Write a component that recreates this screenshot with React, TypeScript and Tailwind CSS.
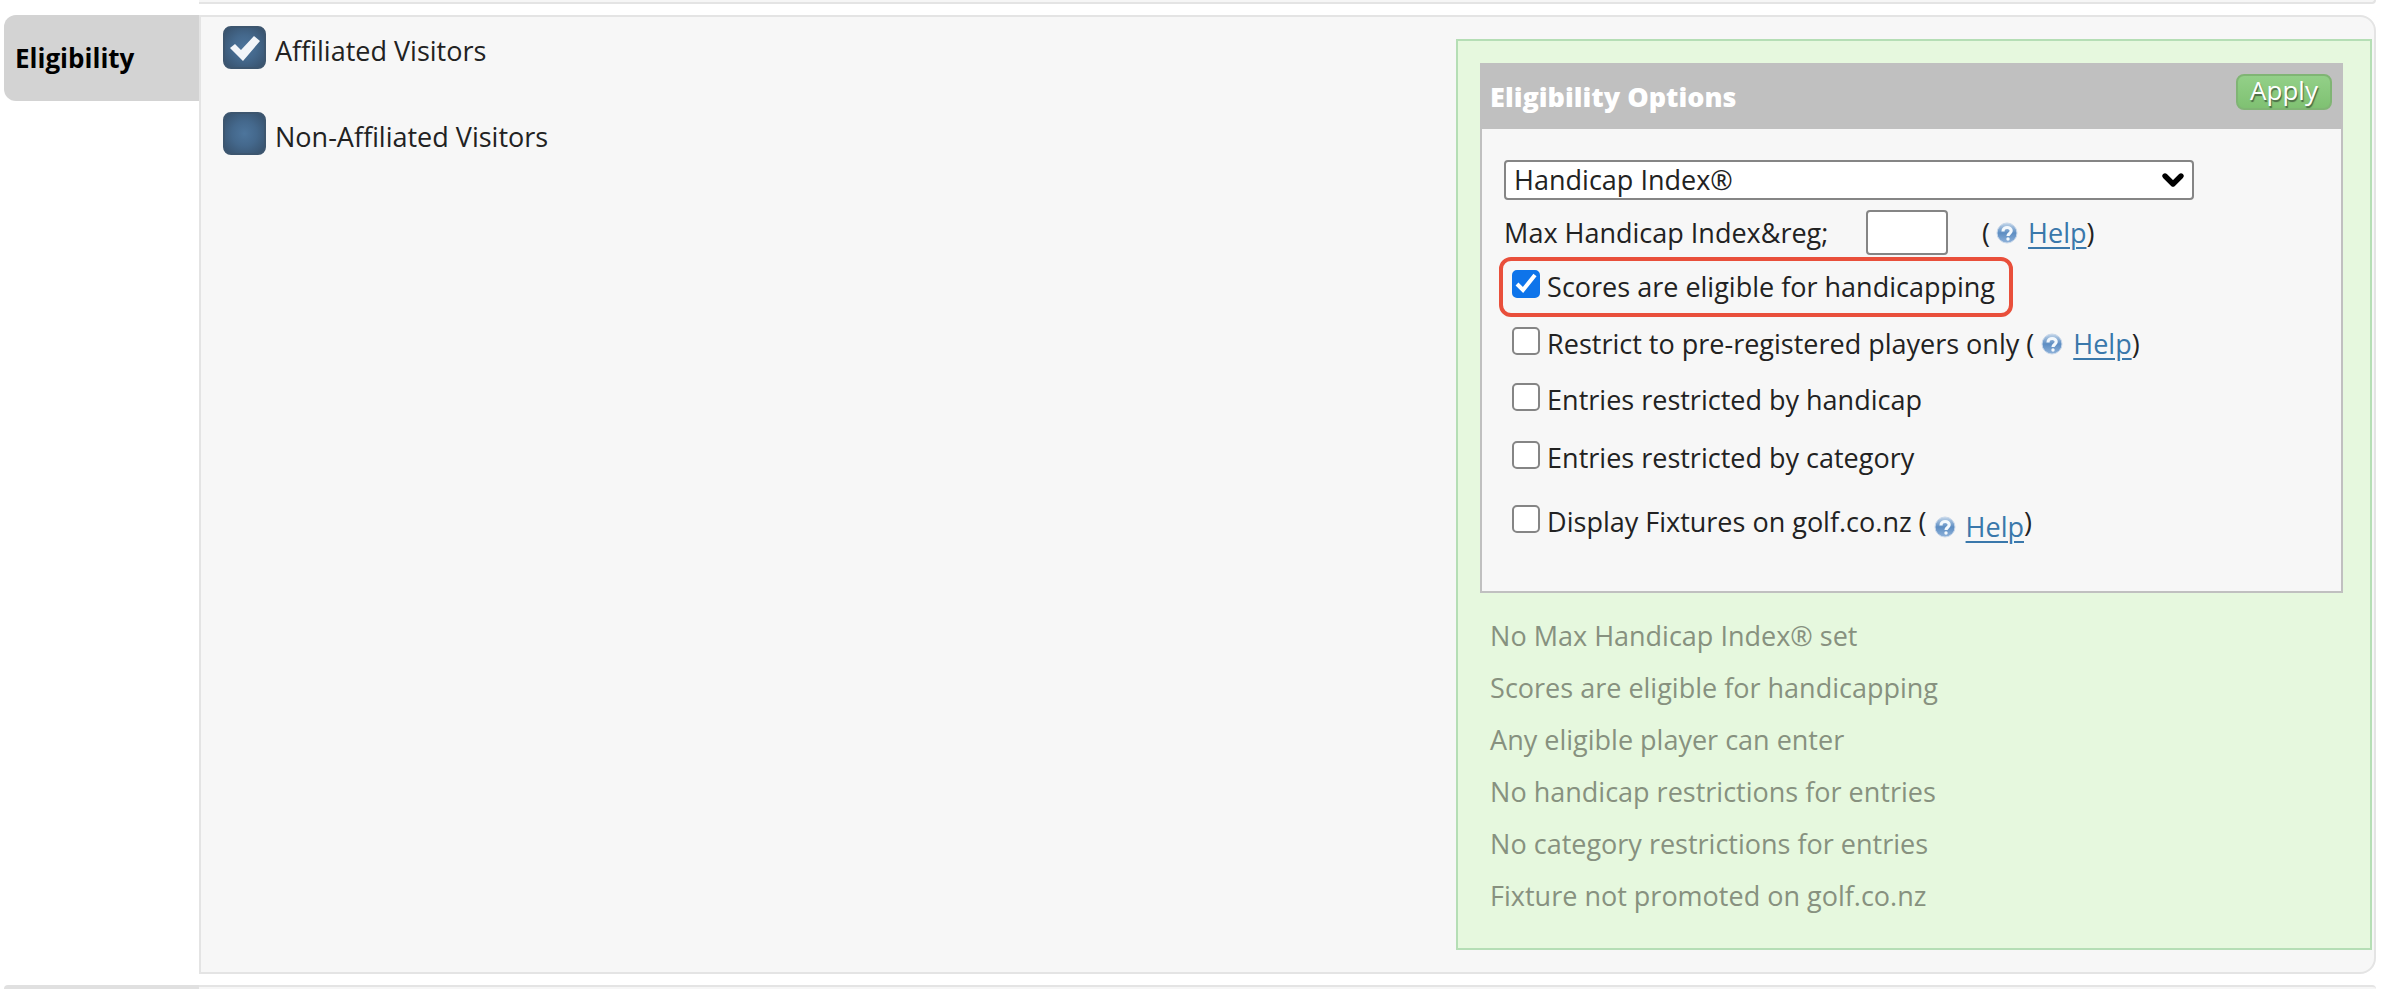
import React, { useState } from 'react';
import { ChevronDown } from 'lucide-react';

const summary = [
  'No Max Handicap Index® set',
  'Scores are eligible for handicapping',
  'Any eligible player can enter',
  'No handicap restrictions for entries',
  'No category restrictions for entries',
  'Fixture not promoted on golf.co.nz',
];

const HelpIcon = () => (
  <svg viewBox="0 0 22 22" className="size-[22px] shrink-0" aria-hidden="true">
    <defs>
      <linearGradient id="helpBall" x1="0" y1="0" x2="0" y2="1">
        <stop offset="0" stopColor="#c3d6ea" />
        <stop offset="0.5" stopColor="#5d8dc2" />
        <stop offset="1" stopColor="#8fb2da" />
      </linearGradient>
    </defs>
    <circle cx="11" cy="11" r="10" fill="url(#helpBall)" stroke="#c9d8ea" strokeWidth="1" />
    <path d="M7 9.500c0-5.500 8.500-5 8.200-.5-.2 2.500-3.200 2.500-3.200 5" fill="none" stroke="#f4f9fd" strokeWidth="3.200" />
    <circle cx="12" cy="17" r="1.700" fill="#f4f9fd" />
  </svg>
);

const HelpLink = () => (
  <span className="flex items-center">
    <HelpIcon />
    <a href="#help" className="ml-[10px] text-[#3a78ab] underline decoration-2 underline-offset-4">
      Help
    </a>
  </span>
);

interface CheckProps {
  id: string;
  label: string;
  defaultChecked?: boolean;
}

const VisitorCheck: React.FC<CheckProps> = ({ id, label, defaultChecked = false }) => {
  const [checked, setChecked] = useState(defaultChecked);

  return (
    <div className="flex h-[43px] items-center gap-[9px]">
      <span className="relative size-[43px] shrink-0">
        <input
          id={id}
          type="checkbox"
          checked={checked}
          onChange={() => setChecked(!checked)}
          className="block size-[43px] appearance-none rounded-lg border-2 border-[#3d566f] bg-[radial-gradient(circle,#4d759c_0%,#44688c_45%,#37506a_100%)]"
        />
        {checked && (
          <svg viewBox="0 0 43 43" className="pointer-events-none absolute inset-0 size-[43px]" aria-hidden="true">
            <path d="M7 22l5-4 6 6L31 10l6 5-17 20z" fill="#f2f5f9" />
          </svg>
        )}
      </span>
      <label htmlFor={id} className="mt-1.5">{label}</label>
    </div>
  );
};

const OptionCheck: React.FC<CheckProps> = ({ id, label, defaultChecked = false }) => {
  const [checked, setChecked] = useState(defaultChecked);

  return (
    <>
      <span className="relative mb-1.5 size-7 shrink-0">
        <input
          id={id}
          type="checkbox"
          checked={checked}
          onChange={() => setChecked(!checked)}
          className="block size-7 appearance-none rounded-[5px] border-2 border-[#858585] bg-white checked:border-[#0e74ea] checked:bg-[#0e74ea]"
        />
        {checked && (
          <svg viewBox="0 0 28 28" className="pointer-events-none absolute inset-0 size-7" aria-hidden="true">
            <path d="M5 14l6 6L23 5" fill="none" stroke="#fff" strokeWidth="4" />
          </svg>
        )}
      </span>
      <label htmlFor={id} className="ml-[7px]">{label}</label>
    </>
  );
};

const EligibilityOptions = () => (
  <form className="border-2 border-[#c0c0c0] bg-[#f7f7f7]" onSubmit={(e) => e.preventDefault()}>
    <div className="flex h-16 items-center justify-between bg-[#c0c0c0] pr-[9px] pl-2">
      <h2 className="font-extrabold text-white">Eligibility Options</h2>
      <button
        type="submit"
        className="mb-2.5 h-9 w-24 rounded-lg border-2 border-[#80b574] bg-linear-to-b from-[#93d088] to-[#7fc172] pb-1 text-[26px] leading-7 text-white [text-shadow:1px_2px_1px_#4b6b45]"
      >
        Apply
      </button>
    </div>

    <div className="px-[22px] pt-[31px] pb-[34px]">
      <div className="relative w-[690px] max-w-full">
        <select
          aria-label="Handicap type"
          className="block h-10 w-full appearance-none rounded-[4px] border-2 border-[#858585] bg-white pl-2 leading-9"
        >
          <option>Handicap Index®</option>
        </select>
        <ChevronDown
          className="pointer-events-none absolute top-1 right-[5px] size-8 text-black"
          strokeWidth={4}
        />
      </div>

      <div className="mt-[10px] flex items-center">
        <label htmlFor="maxIndex" className="w-[362px]">Max Handicap Index&amp;reg;</label>
        <input
          id="maxIndex"
          type="text"
          className="h-[45px] w-[82px] rounded-[4px] border-2 border-[#858585] bg-white px-2"
        />
        <span className="ml-[34px] flex items-center">
          <span className="mr-1.5">(</span>
          <HelpLink />)
        </span>
      </div>

      <div className="mt-0.5 -ml-[5px] flex h-[60px] w-fit items-center rounded-xl border-4 border-[#e94f3b] pr-[14px] pl-[9px]">
        <OptionCheck id="scores" label="Scores are eligible for handicapping" defaultChecked />
      </div>
      <div className="flex h-[54px] items-center pl-2">
        <OptionCheck id="preRegistered" label="Restrict to pre-registered players only" />
        <span className="mx-[7px]">(</span>
        <HelpLink />)
      </div>
      <div className="flex h-[58px] items-center pl-2">
        <OptionCheck id="byHandicap" label="Entries restricted by handicap" />
      </div>
      <div className="flex h-[58px] items-center pl-2">
        <OptionCheck id="byCategory" label="Entries restricted by category" />
      </div>
      <div className="flex h-[70px] items-center pl-2">
        <OptionCheck id="displayFixtures" label="Display Fixtures on golf.co.nz" />
        <span className="mx-[7px]">(</span>
        <span className="mt-2.5"><HelpLink /></span>)
      </div>
    </div>
  </form>
);

export default function App() {
  return (
    <div className="min-h-screen overflow-hidden bg-white pr-[26px] pl-1 font-['Open_Sans',sans-serif] text-[27px] leading-9 text-[#222]">
      <div className="ml-[195px] h-1 rounded-br-xl border-r-2 border-b-2 border-[#e4e4e4] bg-[#f6f6f6]" />

      <section className="mt-[11px] flex items-start">
        <h1 className="flex h-[86px] w-[195px] shrink-0 items-center rounded-l-xl bg-[#d3d3d3] pl-[11px] text-[26px] font-bold text-black">
          Eligibility
        </h1>
        <div className="grid flex-1 grid-cols-[37fr_27fr] rounded-r-2xl border-2 border-[#e4e4e4] bg-[#f7f7f7] pr-0.5 pb-[22px]">
          <div className="flex flex-col gap-[43px] pt-[9px] pl-[22px]">
            <VisitorCheck id="affiliated" label="Affiliated Visitors" defaultChecked />
            <VisitorCheck id="nonAffiliated" label="Non-Affiliated Visitors" />
          </div>
          <div className="mt-[22px] border-2 border-[#b5deb5] bg-[#e6f8de] px-[22px] pt-[22px] pr-[27px] pb-[26px]">
            <EligibilityOptions />
            <ul className="mt-[17px] pl-2.5 leading-[52px] text-[#87917f]">
              {summary.map((line) => (
                <li key={line}>{line}</li>
              ))}
            </ul>
          </div>
        </div>
      </section>

      <div className="mt-[11px] flex h-1">
        <div className="w-[195px] shrink-0 rounded-tl-xl bg-[#e0e0e0]" />
        <div className="flex-1 rounded-tr-xl border-t-2 border-[#e4e4e4] bg-[#f6f6f6]" />
      </div>
    </div>
  );
}
